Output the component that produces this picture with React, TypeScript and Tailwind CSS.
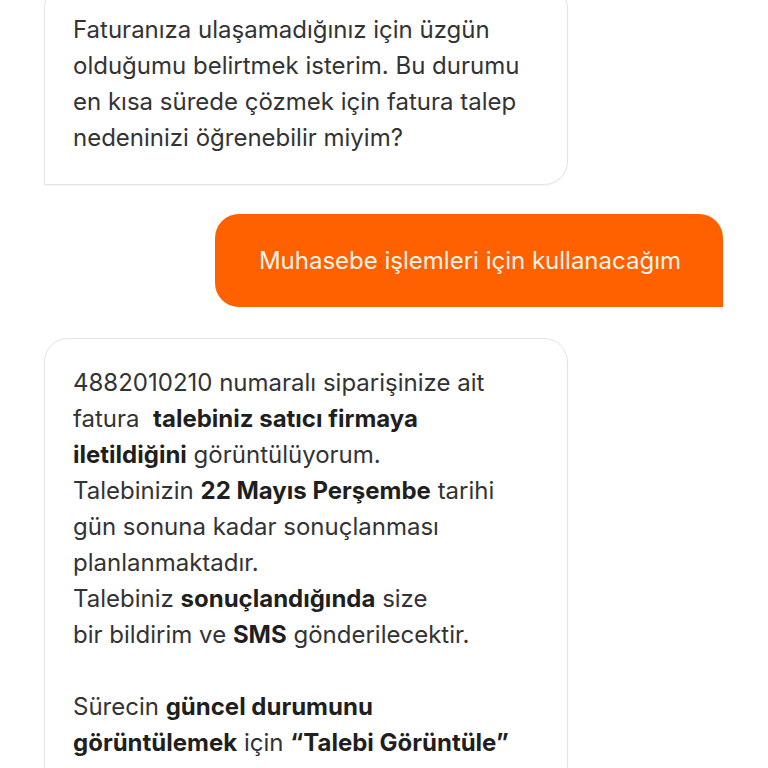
const font = { fontFamily: "Inter, 'Noto Sans', sans-serif" };

function Lines({ lines }: { lines: React.ReactNode[] }) {
	return (
		<>
			{lines.map((line, i) => (
				// biome-ignore lint/suspicious/noArrayIndexKey: static lines
				<div key={i} className="whitespace-pre h-[36px]">
					{line}
				</div>
			))}
		</>
	);
}

export default function App() {
	const first = [
		"Faturanıza ulaşamadığınız için üzgün",
		"olduğumu belirtmek isterim. Bu durumu",
		"en kısa sürede çözmek için fatura talep",
		"nedeninizi öğrenebilir miyim?",
	];

	const reply = [
		"4882010210 numaralı siparişinize ait",
		<>
			fatura{"  "}<b className="font-bold text-[#1f1f1f]">talebiniz satıcı firmaya</b>
		</>,
		<>
			<b className="font-bold text-[#1f1f1f]">iletildiğini</b> görüntülüyorum.
		</>,
		<>
			Talebinizin <b className="font-bold text-[#1f1f1f]">22 Mayıs Perşembe</b> tarihi
		</>,
		"gün sonuna kadar sonuçlanması",
		"planlanmaktadır.",
		<>
			Talebiniz <b className="font-bold text-[#1f1f1f]">sonuçlandığında</b> size
		</>,
		<>
			bir bildirim ve <b className="font-bold text-[#1f1f1f]">SMS</b> gönderilecektir.
		</>,
		"",
		<>
			Sürecin <b className="font-bold text-[#1f1f1f]">güncel durumunu</b>
		</>,
		<>
			<b className="font-bold text-[#1f1f1f]">görüntülemek</b> için{" "}
			<b className="font-bold text-[#1f1f1f]">“Talebi Görüntüle”</b>
		</>,
	];

	return (
		<div className="w-[768px] h-[768px] overflow-hidden bg-white" style={font}>
			<div className="flex flex-col pl-[44px] pr-[45px] mt-[-16px]">
				<div className="w-[524px] rounded-t-[24px] rounded-br-[24px] border border-[#e4e4e4] bg-white px-[28px] pt-[27px] pb-[28px] text-[24px] leading-[36px] text-[#333333] shadow-[0_1px_2px_rgba(0,0,0,0.04)]">
					<Lines lines={first} />
				</div>

				<div className="mt-[29px] self-end h-[93px] flex items-center rounded-t-[24px] rounded-bl-[24px] bg-[#ff6000] pl-[44px] pr-[42px] text-[24px] text-[#fff4ea] whitespace-nowrap">
					Muhasebe işlemleri için kullanacağım
				</div>

				<div className="mt-[31px] w-[524px] rounded-t-[24px] rounded-br-[24px] border border-[#e4e4e4] bg-white px-[28px] pt-[26px] pb-[60px] text-[24px] leading-[36px] text-[#333333] shadow-[0_1px_2px_rgba(0,0,0,0.04)]">
					<Lines lines={reply} />
				</div>
			</div>
		</div>
	);
}
